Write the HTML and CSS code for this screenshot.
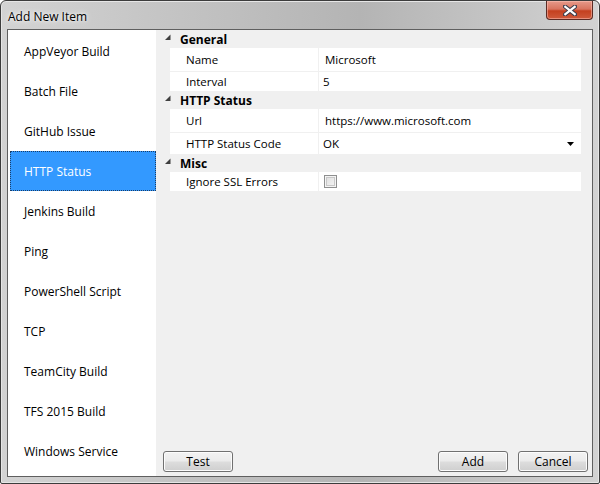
FILE: index.html
```html
<!DOCTYPE html>
<html>
<head>
<meta charset="utf-8">
<link rel="stylesheet" href="styles.css">
</head>
<body>
<div class="window">
  <div class="titlebar">
    <span class="title">Add New Item</span>
    <div class="close">
      <svg width="14" height="11" viewBox="0 0 14 11">
        <path d="M2 1.5 L12 9.5 M12 1.5 L2 9.5" stroke="#3b3b4a" stroke-width="4.2" stroke-linecap="square"/>
        <path d="M2.3 1.8 L11.7 9.2 M11.7 1.8 L2.3 9.2" stroke="#ffffff" stroke-width="2.2" stroke-linecap="square"/>
      </svg>
    </div>
  </div>
  <div class="client">
    <ul class="list">
      <li class="item">AppVeyor Build</li>
      <li class="item">Batch File</li>
      <li class="item">GitHub Issue</li>
      <li class="item selected">HTTP Status</li>
      <li class="item">Jenkins Build</li>
      <li class="item">Ping</li>
      <li class="item">PowerShell Script</li>
      <li class="item">TCP</li>
      <li class="item">TeamCity Build</li>
      <li class="item">TFS 2015 Build</li>
      <li class="item">Windows Service</li>
    </ul>
    <div class="panel">
      <div class="grid">
        <div class="cat">
          <svg class="tri" width="7" height="7" viewBox="0 0 7 7"><polygon points="6.5,0.5 6.5,6 1,6" fill="#3f3f3f"/></svg>
          <span>General</span>
        </div>
        <div class="row row-tall"><div class="name">Name</div><div class="value value-text">Microsoft</div></div>
        <div class="row row-short"><div class="name">Interval</div><div class="value">5</div></div>
        <div class="cat">
          <svg class="tri" width="7" height="7" viewBox="0 0 7 7"><polygon points="6.5,0.5 6.5,6 1,6" fill="#3f3f3f"/></svg>
          <span>HTTP Status</span>
        </div>
        <div class="row row-tall"><div class="name">Url</div><div class="value value-text">https://www.microsoft.com</div></div>
        <div class="row row-combo"><div class="name">HTTP Status Code</div><div class="value combo"><span>OK</span><svg width="7" height="4" viewBox="0 0 7 4"><polygon points="0,0 7,0 3.5,4" fill="#000"/></svg></div></div>
        <div class="cat">
          <svg class="tri" width="7" height="7" viewBox="0 0 7 7"><polygon points="6.5,0.5 6.5,6 1,6" fill="#3f3f3f"/></svg>
          <span>Misc</span>
        </div>
        <div class="row row-short"><div class="name">Ignore SSL Errors</div><div class="value"><span class="check"></span></div></div>
      </div>
      <div class="buttons">
        <button class="btn">Test</button>
        <div class="spacer"></div>
        <button class="btn">Add</button>
        <button class="btn">Cancel</button>
      </div>
    </div>
  </div>
</div>
</body>
</html>
```
FILE: styles.css
```css
* { box-sizing: border-box; }
html, body { margin: 0; padding: 0; }
body {
  width: 600px;
  height: 484px;
  font-family: "Open Sans", "Noto Sans", sans-serif;
  font-size: 11.5px;
  color: #000;
  background: #fff;
}
.window {
  width: 600px;
  height: 484px;
  border: 1px solid #3c3c3c;
  border-radius: 6px 6px 2px 2px;
  background: linear-gradient(to right, #d3d3d3 0%, #c3c3c3 30%, #b4b4b4 60%, #c6c6c6 85%, #d2d2d2 100%);
  display: flex;
  flex-direction: column;
  box-shadow: inset 0 0 0 1px #e6e6e6;
}
.titlebar {
  height: 28px;
  display: flex;
  align-items: flex-start;
  justify-content: space-between;
  flex: none;
}
.title {
  margin: 7px 0 0 7px;
  font-size: 12px;
  color: #000;
  text-shadow: 0 0 6px #f4f4f4, 0 0 3px #fafafa;
}
.close {
  width: 47px;
  height: 19px;
  margin-right: 6px;
  border: 1px solid #5b2b24;
  border-top: none;
  border-radius: 0 0 4px 4px;
  background: linear-gradient(#e79a8a 0%, #d9745f 45%, #c4401f 55%, #cf5a3b 100%);
  box-shadow: inset 0 0 0 1px rgba(255,200,190,0.5);
  display: flex;
  align-items: center;
  justify-content: center;
}
.client {
  flex: 1;
  margin: 0 6px 6px 6px;
  border: 1px solid #5f5f5f;
  display: flex;
  background: #f0f0f0;
  min-height: 0;
}
.list {
  list-style: none;
  margin: 0;
  padding: 1px 0 0 2px;
  width: 148px;
  background: #fff;
  flex: none;
}
.item {
  height: 40px;
  display: flex;
  align-items: center;
  padding-left: 14px;
  font-size: 12px;
  color: #000;
}
.item.selected {
  background: #3399ff;
  color: #fff;
  border: 1px dotted #1a3d66;
  padding-left: 13px;
}
.panel {
  flex: 1;
  display: flex;
  flex-direction: column;
  background: #f0f0f0;
}
.grid {
  display: flex;
  flex-direction: column;
  padding-right: 11px;
}
.cat {
  height: 18px;
  display: flex;
  align-items: center;
  font-weight: bold;
  font-size: 12px;
}
.tri { margin: 0 9px 3px 8px; }
.row {
  margin-left: 14px;
  display: grid;
  grid-template-columns: 148px 1fr;
  column-gap: 1px;
  background: #f0f0f0;
}
.row + .row { margin-top: 1px; }
.row-tall { height: 23px; }
.row-short { height: 19px; }
.row-combo { height: 21px; }
.name, .value {
  background: #fff;
  display: flex;
  align-items: center;
}
.name { padding-left: 16px; }
.value { padding-left: 4px; }
.value-text { padding-left: 6px; }
.combo { justify-content: space-between; padding-right: 7px; }
.check {
  width: 13px;
  height: 13px;
  border: 1px solid #8e8f8f;
  background: linear-gradient(135deg, #dcdcdc, #f6f6f6);
  box-shadow: inset 0 0 0 1px #f4f4f4, inset 0 0 0 2px #c8c8c8;
  margin-left: 1px;
}
.buttons {
  margin-top: auto;
  display: flex;
  gap: 10px;
  padding: 0 4px 4px 7px;
}
.spacer { flex: 1; }
.btn {
  width: 70px;
  height: 21px;
  border: 1px solid #707070;
  border-radius: 3px;
  background: linear-gradient(#f2f2f2 0%, #ebebeb 48%, #dddddd 52%, #cfcfcf 100%);
  box-shadow: inset 0 0 0 1px #fcfcfc;
  font-family: "Open Sans", "Noto Sans", sans-serif;
  font-size: 12px;
  color: #000;
  padding: 0;
  line-height: 18px;
}
```
